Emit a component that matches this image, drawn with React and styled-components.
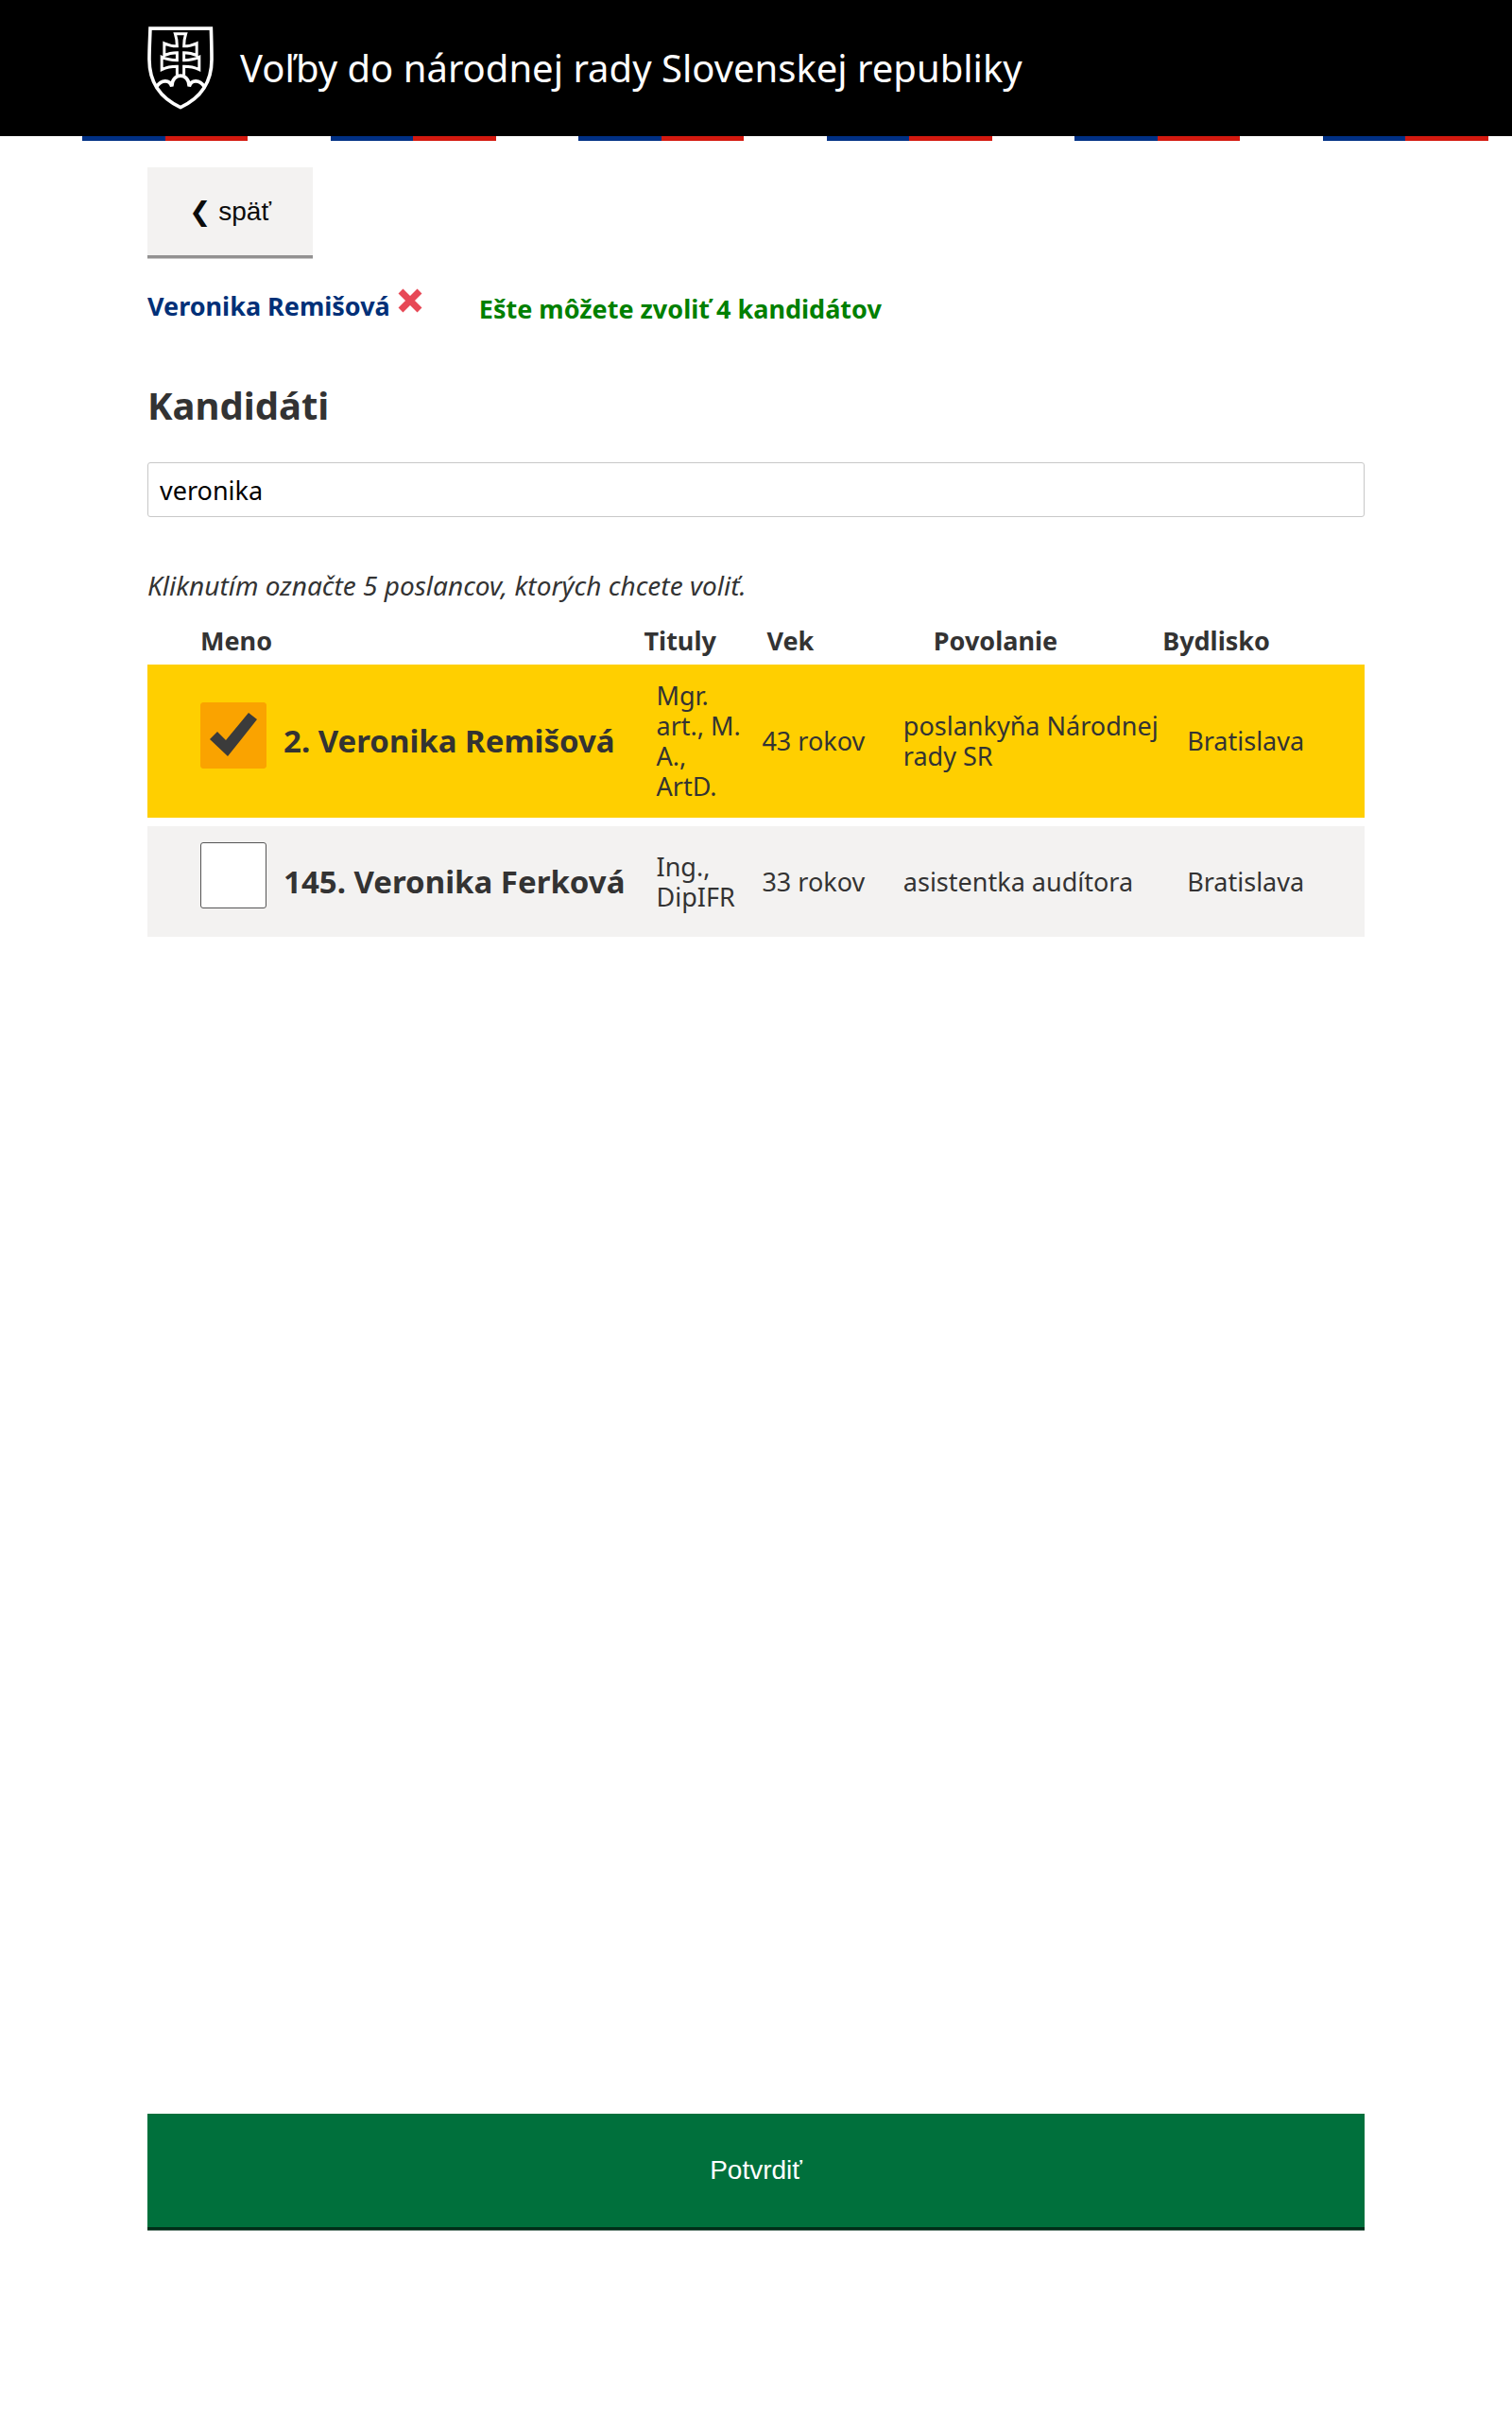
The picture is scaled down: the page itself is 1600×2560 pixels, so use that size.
import React, { useState } from "react";
import styled, { createGlobalStyle } from "styled-components";

const GlobalStyle = createGlobalStyle`
  *, *::before, *::after { box-sizing: border-box; }
  body {
    margin: 0;
    background: #fff;
    color: #333;
    font-family: "Noto Sans", "Open Sans", sans-serif;
    font-size: 27px;
    line-height: 32px;
  }
`;

const Page = styled.div`
  display: flex;
  flex-direction: column;
  min-height: 100vh;
`;

const Header = styled.header`
  display: flex;
  align-items: center;
  gap: 28px;
  height: 144px;
  padding: 0 156px;
  background: #000;
  color: #fff;
`;

const Crest = styled.svg`
  flex: none;
  width: 70px;
  height: 88px;
`;

const SiteTitle = styled.span`
  font-size: 40px;
  line-height: 48px;
`;

const Tricolour = styled.div`
  height: 5px;
  background: repeating-linear-gradient(
    90deg,
    #fff 0 calc(100% / 6),
    #003084 calc(100% / 6) calc(100% / 3),
    #d4190f calc(100% / 3) 50%
  );
  background-size: 525px 100%;
`;

const Main = styled.main`
  display: flex;
  flex: 1;
  flex-direction: column;
  padding: 28px 156px 204px;
`;

const BackButton = styled.button`
  align-self: flex-start;
  height: 93px;
  padding: 0 44px;
  border: 0;
  background: #f3f2f1;
  box-shadow: 0 3px 0 #929191, 0 4px 0 #c9c8c8;
  color: #0b0c0c;
  font: 28px/32px "Liberation Sans", "DejaVu Sans", sans-serif;
  cursor: pointer;
`;

const Selection = styled.div`
  display: flex;
  align-items: center;
  gap: 60px;
  margin-top: 35px;
  font-weight: 700;
`;

const Chosen = styled.div`
  display: flex;
  align-items: center;
  gap: 8px;
  color: #003078;
`;

const RemoveButton = styled.button`
  display: flex;
  padding: 0 0 12px;
  border: 0;
  background: none;
  cursor: pointer;
`;

const Remaining = styled.p`
  margin: 0;
  padding-top: 6px;
  color: #008000;
`;

const Heading = styled.h1`
  margin: 62px 0 36px;
  font-size: 40px;
  line-height: 48px;
`;

const Search = styled.input`
  width: 100%;
  height: 58px;
  padding: 0 12px;
  border: 1px solid #c8c8c8;
  border-radius: 3px;
  background: #fff;
  color: #000;
  font: inherit;
`;

const Hint = styled.p`
  margin: 56px 0 18px;
  font-size: 28px;
  font-style: italic;
`;

const Table = styled.table`
  width: 100%;
  border-collapse: separate;
  border-spacing: 0 9px;
  table-layout: fixed;
  text-align: left;
`;

const Col = styled.col`
  width: ${(p) => p.$width};
`;

const HeadCell = styled.th`
  padding: 0 0 0 ${(p) => p.$indent}px;
`;

const Row = styled.tr`
  background: ${(p) => (p.$selected ? "#ffcf00" : "#f3f2f1")};
`;

const Cell = styled.td`
  padding: 17px ${(p) => p.$gap || 0}px 17px ${(p) => p.$indent}px;
`;

const CandidateLabel = styled.label`
  display: flex;
  align-items: center;
  gap: 18px;
  font-size: 33px;
  font-weight: 700;
  white-space: nowrap;
  cursor: pointer;
`;

const TickBox = styled.span`
  display: grid;
  flex: none;
  width: 70px;
  height: 70px;
  margin-bottom: 13px;

  > * { grid-area: 1 / 1; }
`;

const Tick = styled.input`
  width: 70px;
  height: 70px;
  margin: 0;
  border: 1px solid #555;
  border-radius: 3px;
  background: #fff;
  appearance: none;
  cursor: pointer;

  &:checked {
    border-color: #faa300;
    background: #faa300;
  }
`;

const TickMark = styled.svg`
  width: 70px;
  height: 70px;
  pointer-events: none;
`;

const ConfirmButton = styled.button`
  width: 100%;
  height: 120px;
  margin-top: auto;
  border: 0;
  background: #00703c;
  box-shadow: 0 3px 0 #002d18, 0 4px 0 #7f968b;
  color: #fff;
  font: 28px/32px "Liberation Sans", sans-serif;
  cursor: pointer;
`;

const columns = [
  { title: "Meno", width: "40.8%", headIndent: 56, indent: 56 },
  { title: "Tituly", width: "9.7%", headIndent: 0, indent: 13, gap: 16 },
  { title: "Vek", width: "11.6%", headIndent: 5, indent: 0 },
  { title: "Povolanie", width: "21.3%", headIndent: 32, indent: 0 },
  { title: "Bydlisko", width: "16.6%", headIndent: 0, indent: 26 },
];

const candidates = [
  { id: 2, name: "Veronika Remišová", details: ["Mgr. art., M. A., ArtD.", "43 rokov", "poslankyňa Národnej rady SR", "Bratislava"] },
  { id: 145, name: "Veronika Ferková", details: ["Ing., DipIFR", "33 rokov", "asistentka audítora", "Bratislava"] },
];

export default function App() {
  const [query, setQuery] = useState("veronika");
  const [selected, setSelected] = useState([2]);

  const toggle = (id) =>
    setSelected((ids) => (ids.includes(id) ? ids.filter((i) => i !== id) : [...ids, id]));

  return (
    <>
      <GlobalStyle />
      <Page>
        <Header>
          <Crest viewBox="48 54 212 266" fill="none" stroke="#fff" strokeWidth="11" aria-hidden="true">
            <path d="M57 60H252C253 95 254 120 254 160C254 235 215 285 154 313C93 285 54 235 54 160C54 120 56 95 57 60Z" />
            <path d="M143 210V182Q115 182 94 192V152Q115 162 143 162V138Q120 138 102 147V108Q120 117 143 117Q143 95 137 77H171Q165 95 165 117Q188 117 206 108V147Q188 138 165 138V162Q193 162 214 152V192Q193 182 165 182V210" strokeWidth="9" />
            <path d="M78 246C92 225 119 222 126 246C126 200 182 200 182 246C189 222 216 225 230 246" />
          </Crest>
          <SiteTitle>Voľby do národnej rady Slovenskej republiky</SiteTitle>
        </Header>
        <Tricolour />
        <Main>
          <BackButton type="button">❮ späť</BackButton>
          <Selection>
            {candidates.filter((c) => selected.includes(c.id)).map((c) => (
              <Chosen key={c.id}>
                {c.name}
                <RemoveButton type="button" aria-label={`Odstrániť ${c.name}`} onClick={() => toggle(c.id)}>
                  <svg width="26" height="26" viewBox="0 0 26 26" stroke="#e74856" strokeWidth="7" aria-hidden="true">
                    <path d="M3 3L23 23M23 3L3 23" />
                  </svg>
                </RemoveButton>
              </Chosen>
            ))}
            <Remaining>Ešte môžete zvoliť {5 - selected.length} kandidátov</Remaining>
          </Selection>
          <Heading id="candidates">Kandidáti</Heading>
          <Search type="text" aria-labelledby="candidates" value={query} onChange={(e) => setQuery(e.target.value)} />
          <Hint>Kliknutím označte 5 poslancov, ktorých chcete voliť.</Hint>
          <Table>
            <colgroup>
              {columns.map((c) => <Col key={c.title} $width={c.width} />)}
            </colgroup>
            <thead>
              <tr>
                {columns.map((c) => <HeadCell key={c.title} scope="col" $indent={c.headIndent}>{c.title}</HeadCell>)}
              </tr>
            </thead>
            <tbody>
              {candidates.filter((c) => c.name.toLowerCase().includes(query.toLowerCase())).map((c) => (
                <Row key={c.id} $selected={selected.includes(c.id)}>
                  <Cell $indent={columns[0].indent}>
                    <CandidateLabel>
                      <TickBox>
                        <Tick type="checkbox" checked={selected.includes(c.id)} onChange={() => toggle(c.id)} />
                        {selected.includes(c.id) && (
                          <TickMark viewBox="0 0 70 70" fill="#3b3b3b" aria-hidden="true">
                            <path d="M10 39L18 31L27 40L51 11L60 18L29 57Z" />
                          </TickMark>
                        )}
                      </TickBox>
                      {c.id}. {c.name}
                    </CandidateLabel>
                  </Cell>
                  {c.details.map((text, i) => (
                    <Cell key={i} $indent={columns[i + 1].indent} $gap={columns[i + 1].gap}>{text}</Cell>
                  ))}
                </Row>
              ))}
            </tbody>
          </Table>
          <ConfirmButton type="button">Potvrdiť</ConfirmButton>
        </Main>
      </Page>
    </>
  );
}
